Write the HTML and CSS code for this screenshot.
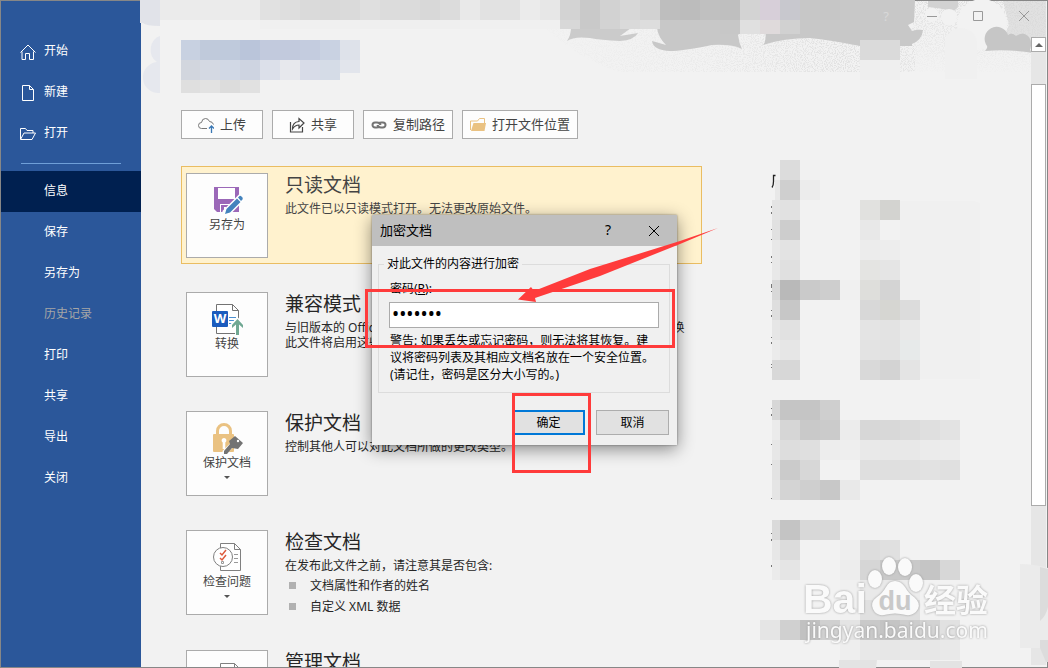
FILE: index.html
```html
<!DOCTYPE html>
<html lang="zh-CN">
<head>
<meta charset="utf-8">
<title>信息</title>
<link rel="stylesheet" href="styles.css">
</head>
<body>
<div class="window">
  <nav class="sidebar">
    <a class="nav-item" href="#"><svg class="nav-icon" viewBox="0 0 16 16"><path d="M.5 8.500 8 1l7.500 7.500M2 7.500v8h3.500v-6h4v6h4v-8"/></svg>开始</a>
    <a class="nav-item" href="#"><svg class="nav-icon" viewBox="0 0 16 16"><path d="M2.500.5h7l4 4v11h-11zM9.500.5v4h4"/></svg>新建</a>
    <a class="nav-item" href="#"><svg class="nav-icon" viewBox="0 0 16 16"><path d="M.5 13V2.500h5l1.500 2h6V7M.5 13.500 4 7h11.500l-3.500 6.500z"/></svg>打开</a>
    <hr class="nav-rule">
    <a class="nav-item nav-item--active" href="#">信息</a>
    <a class="nav-item" href="#">保存</a>
    <a class="nav-item" href="#">另存为</a>
    <a class="nav-item nav-item--disabled" href="#">历史记录</a>
    <a class="nav-item" href="#">打印</a>
    <a class="nav-item" href="#">共享</a>
    <a class="nav-item" href="#">导出</a>
    <a class="nav-item" href="#">关闭</a>
  </nav>

  <svg class="banner-art" viewBox="140 0 908 96" aria-hidden="true">
    <defs>
      <filter id="grain" x="0" y="0" width="1" height="1">
        <feTurbulence type="fractalNoise" baseFrequency="0.9" numOctaves="2" seed="4"/>
        <feColorMatrix values="0 0 0 0 .74  0 0 0 0 .74  0 0 0 0 .74  6 0 0 0 -2.8"/>
        <feComposite in2="SourceGraphic" operator="in"/>
      </filter>
      <linearGradient id="fade" x1="0" y1="0" x2="1" y2="0">
        <stop offset="0" stop-color="#fff" stop-opacity=".1"/>
        <stop offset=".45" stop-color="#fff" stop-opacity=".4"/>
        <stop offset=".8" stop-color="#fff" stop-opacity=".9"/>
        <stop offset="1" stop-color="#fff" stop-opacity=".7"/>
      </linearGradient>
      <linearGradient id="fade-corner" x1="0" y1="0" x2="0" y2="1">
        <stop offset="0" stop-color="#fff"/>
        <stop offset="1" stop-color="#fff" stop-opacity=".1"/>
      </linearGradient>
    </defs>
    <path d="M545 28H915V72H620Q580 60 545 28z" fill="url(#fade)" filter="url(#grain)"/>
    <path d="M913 1h133v71H913z" fill="url(#fade-corner)" filter="url(#grain)"/>
    <path d="M567 41q4-6 4-13h60l-11 8 18-3q-4 7-18 8-20-1-30-3-16-2-23 3z" fill="#cbcbcb"/>
    <path d="M660 28h82l-4 7q1 8 4 14-10-5-30-4-30 6-42 6-17-1-18-10l14 4q-8-8-9-17z" fill="#c8c8c8"/>
    <path d="M763 45q4-4 2-16l35-29h115l-1 22-6 3 4 6q6-2 11-1-1 10-11 14v2h-52q-30-6-50-8-26 0-47 7z" fill="#c8c8c8"/>
    <path d="M928 1h30q2 8-6 10-12-3-24-4z" fill="#d2d2d2"/>
    <path d="M1003 1h43v40h-37q-6-4 0-16z" fill="#d6d6d6" opacity=".6"/>
    <circle cx="982" cy="24" r="25" fill="#f2f2f2"/>
    <circle cx="949" cy="17" r="8" fill="#f2f2f2"/>
    <circle cx="932" cy="15" r="7" fill="#f2f2f2"/>
    <path d="M945 79V44a16 16 0 0 1 32 0v35z" fill="#f0f0f0"/>
    <path d="M985 51q3-3 2-5a12 12 0 1 1 21-11q4-3 8 1 7-5 12 0 5 5 2 14l3 3q-24-4-48-2z" fill="#c6c6c6"/>
    <path d="M160 36a12 14 0 0 0-3 26 14 14 0 0 0 3 31z" fill="#e6e8ee"/>
    <path d="M140 0h20v26q-14 0-17-3h-3z" fill="#e1e3e9"/>
    <g data-mosaic="banner"></g>
  </svg>

  <main class="main">
    <div class="content">
      <header class="titlebar">
        <button class="win-btn win-btn--faint" aria-label="帮助">?</button>
        <button class="win-btn" aria-label="最小化"><svg viewBox="0 0 12 12"><path d="M1 6.500h10"/></svg></button>
        <button class="win-btn" aria-label="最大化"><svg viewBox="0 0 12 12"><path d="M1.500 1.500h9v9h-9z"/></svg></button>
        <button class="win-btn" aria-label="关闭窗口"><svg viewBox="0 0 12 12"><path d="m1 1 10 10M11 1 1 11"/></svg></button>
      </header>
      <svg class="doc-title" viewBox="181 40 180 53" aria-hidden="true"><g data-mosaic="title"></g></svg>

      <div class="toolbar">
        <button class="tool tool--wide"><svg viewBox="0 0 16 16"><path d="M9 11.500H3.500a3 3 0 0 1 0-6q.5-4 4-4 3 0 4 3 3 0 4 3" fill="none" stroke="#777"/><path d="M13.500 16V9M11 11.500l2.500-2.500 2.500 2.500" fill="none" stroke="#3a78b5" stroke-width="1.300"/></svg><span>上传</span></button>
        <button class="tool tool--wide"><svg viewBox="0 0 16 16"><path d="M1.500 5v10h12v-5M3.500 12q0-7 6.500-7.500V1.500L15 6l-5 5V8Q6 8 3.500 12z" fill="none" stroke="#444" stroke-width="1.200"/></svg><span>共享</span></button>
        <button class="tool"><svg viewBox="0 0 16 16"><g fill="none" stroke="#737373" stroke-width="2"><path d="M8.500 9.500q-1 1-3 1H4a2.500 2.500 0 0 1 0-5h2q3 0 3.500 2.500"/><path d="M7.500 6.500q1-1 3-1H12a2.500 2.500 0 0 1 0 5h-2q-3 0-3.500-2.500"/></g></svg><span>复制路径</span></button>
        <button class="tool"><svg viewBox="0 0 16 16"><path d="M.5 13V4h7l2-2.500h5V6" fill="none" stroke="#eac282"/><path d="M1 14 3.500 6H16l-1.500 8z" fill="#eac282"/></svg><span>打开文件位置</span></button>
      </div>

      <div class="columns">
        <div class="sections">
          <section class="info info--notice">
            <button class="tile">
              <svg viewBox="0 0 32 32"><path d="M3 2h25v25H6l-3-3z" fill="#9b68b8"/><path d="M7 3h17v11H7z" fill="#fff"/><path d="M9 19h12v8H9z" fill="#fff"/><path d="M10 20h9v7h-4v-5h-2v5h-3z" fill="#9b68b8"/><path d="M14 29 31 12" stroke="#fff" stroke-width="8"/><path d="m14 29 1.500-5L26 13.500l3.500 3.500L19 27.500zM27 12.500l1.500-1.500q1-.5 2 .5l1 1q.5 1 0 2L30 16z" fill="#4483bd"/></svg>
              另存为
            </button>
            <div class="info-text"><h2>只读文档</h2><p>此文件已以只读模式打开。无法更改原始文件。</p></div>
          </section>

          <section class="info">
            <button class="tile">
              <svg viewBox="0 0 32 32"><path d="M5.500.5h16l6 6v23h-22zM21.500.5v6h6" fill="#fff" stroke="#737373"/><rect x="1" y="7" width="16" height="16" rx="1" fill="#1b5cbe"/><text x="9" y="19" text-anchor="middle" class="word-letter">W</text><path d="M18 13.500h7M18 16.500h5M18 19.500h3" stroke="#4a90d0"/><path d="m26.500 13 7 7.500-3 1L28 19.500V32h-4V19.500l-3 2-2-1z" fill="#fff"/><path d="m26.500 15 5.500 6v3l-4-3.500V31h-3V20.500L21 24v-3z" fill="#70a893"/></svg>
              转换
            </button>
            <div class="info-text"><h2>兼容模式</h2><p>与旧版本的 Office 兼容，可能会禁用某些新功能以防止其中出现问题。转换<br>此文件将启用这些功能，但可能会导致布局更改。</p></div>
          </section>

          <section class="info">
            <button class="tile">
              <svg viewBox="0 0 32 32"><path d="M6.500 12V8a6.500 6.500 0 0 1 13 0v4" fill="none" stroke="#eac282" stroke-width="3"/><rect x="2" y="11" width="21" height="18" rx="1" fill="#eac282"/><path d="M13 15a2.500 2.500 0 0 0-1.300 4.600V26h2.600v-6.400A2.500 2.500 0 0 0 13 15z" fill="#fff"/><path d="m13 30 11-11" stroke="#fff" stroke-width="5"/><path d="m24 13 8 7-5 6-6-1-5 6h-3v-3l6-7-1-3z" fill="#737373"/><circle cx="27" cy="18" r="1.200" fill="#fff"/></svg>
              保护文档<span class="caret"></span>
            </button>
            <div class="info-text"><h2>保护文档</h2><p>控制其他人可以对此文档所做的更改类型。</p></div>
          </section>

          <section class="info">
            <button class="tile">
              <svg viewBox="0 0 32 32"><path d="M9.500 1.500h14l6 6v21h-20zM23.500 1.500v6h6" fill="#fff" stroke="#808080"/><path d="M23 12.500h4M23 16.500h4M23 20.500h4" stroke="#999"/><circle cx="12" cy="15" r="9.500" fill="#fff" stroke="#808080"/><path d="m9 11 2 2 4-5M9 16l2 2 4-5" fill="none" stroke="#dd5a3c" stroke-width="1.500"/><path d="M10.500 19.500h2v2h-2z" fill="none" stroke="#999"/></svg>
              检查问题<span class="caret"></span>
            </button>
            <div class="info-text"><h2>检查文档</h2><p>在发布此文件之前，请注意其是否包含:</p>
              <ul class="findings"><li>文档属性和作者的姓名</li><li>自定义 XML 数据</li></ul></div>
          </section>

          <section class="info">
            <button class="tile">
              <svg viewBox="0 0 32 32"><path d="M9.500 1.500h14l6 6v21h-20zM23.500 1.500v6h6" fill="#fff" stroke="#808080"/></svg>
              管理文档
            </button>
            <div class="info-text"><h2>管理文档</h2></div>
          </section>
        </div>

        <svg class="properties" viewBox="760 160 220 508" aria-hidden="true">
          <path d="M900 201h74l6 2v176h-80z" fill="#f0f0f0"/>
          <g data-mosaic="properties"></g>
          <path d="M775.500 175.500h-2v6q0 4-1.500 6" fill="none" stroke="#222" stroke-width="1.300"/>
          <path d="M771.500 206v2m0 4v2m0 15v1m0 9v1m0 16v2m0 4v1m0 21v4m0 3v1m0 18v1m0 4v2m0 20v1m0 4v2m0 20v1m0 2v1m0 40v1m0 5v2m0 28v1m0 19v1m0 33v1m0 34v1m0 5v2m0 24v2" stroke="#777" fill="none"/>
        </svg>
      </div>
    </div>
    <div class="scrollbar">
      <button class="scroll-up" aria-label="向上滚动"></button>
      <div class="scroll-track"><div class="scroll-thumb"></div></div>
    </div>
  </main>

  <svg class="watermark" viewBox="760 550 288 118" aria-hidden="true">
    <path d="M1020 564q14 0 28 4v80h-28z" fill="#ebebeb"/><path d="M1040 567l8 2v38q-2 9-8 14z" fill="#dcdcdc"/><path d="M1040 640h8v22h-2l-6-14z" fill="#dcdcdc"/>
    <path d="M839 660h38l-1 8h-37zM930 661h32v7h-32z" fill="#e3e3e3"/>
    <g class="mark">
      <text x="803" y="613" class="mark-latin">Bai</text>
      <ellipse cx="875" cy="579" rx="7" ry="9"/><ellipse cx="889" cy="566" rx="7" ry="9"/><ellipse cx="905" cy="567" rx="7" ry="9"/><ellipse cx="916" cy="583" rx="7" ry="9"/>
      <path d="M895 581q6 0 10 6 4 7 9 10 7 6 4 12-4 7-12 6-11-3-22 0-8 1-11-6-3-7 4-12 5-3 9-10 3-6 9-6z"/>
      <text x="924" y="612" class="mark-cjk">经验</text>
      <text x="806" y="638" class="mark-url">jingyan.baidu.com</text>
    </g>
    <text x="895" y="610" text-anchor="middle" class="mark-du">du</text>
  </svg>

  <form class="dialog" role="dialog" aria-labelledby="dialog-title">
    <header class="dialog-head">
      <h1 id="dialog-title">加密文档</h1>
      <button type="button" class="dialog-btn" aria-label="帮助">?</button>
      <button type="button" class="dialog-btn" aria-label="关闭"><svg viewBox="0 0 12 12"><path d="m1 1 10 10M11 1 1 11"/></svg></button>
    </header>
    <fieldset class="group">
      <legend>对此文件的内容进行加密</legend>
      <label for="password">密码(<u>R</u>):</label>
      <input id="password" type="password" value="1234567">
      <p>警告: 如果丢失或忘记密码，则无法将其恢复。建<br>议将密码列表及其相应文档名放在一个安全位置。<br>(请记住，密码是区分大小写的。)</p>
    </fieldset>
    <div class="dialog-actions">
      <button type="button" class="action action--default">确定</button>
      <button type="button" class="action">取消</button>
    </div>
    <svg class="callouts" viewBox="362 215 360 262" aria-hidden="true">
      <g fill="none" stroke="#ff3b3b" stroke-width="3"><path d="M366.500 290.500h307v56h-307z"/><path d="M513.500 394.500h76v77h-76z"/></g>
      <path d="M518 299.500 531 287l3 4 56-22 90-28 38-13-38 16-80 32-65 22 1 4z" fill="#ff3b3b"/>
    </svg>
  </form>
</div>
<script src="mosaic.js"></script>
</body>
</html>
```

FILE: styles.css
```css
* { box-sizing: border-box; }

body {
  margin: 0;
  overflow: hidden;
  font: 12px/16px "Noto Sans", "Noto Sans CJK SC", sans-serif;
  color: #262626;
}

button, input { font: inherit; color: inherit; }
h1, h2, p, ul { margin: 0; padding: 0; font-weight: 400; }

.window {
  position: relative;
  display: grid;
  grid-template-columns: 140px 1fr;
  height: 100vh;
  padding: 1px;
  background: #878787;
}

.sidebar { padding-top: 30px; background: #2b579a; }
.nav-item {
  display: flex;
  align-items: center;
  height: 41px;
  padding: 0 0 2px 43px;
  color: #fff;
  text-decoration: none;
}
.nav-icon {
  width: 16px;
  height: 16px;
  margin: 2px 8px 0 -24px;
  fill: none;
  stroke: #fff;
}
.nav-rule { height: 1px; margin: 9px 20px 7px; border: 0; background: #6f9fd8; }
.nav-item--active { background: #002050; }
.nav-item--disabled { color: #a6a6a6; }

.banner-art {
  position: absolute;
  top: 0;
  left: 140px;
  width: 908px;
  height: 96px;
}

.main { display: flex; min-width: 0; min-height: 0; background: #f2f2f2; }
.content { position: relative; flex: 1; min-width: 0; padding-left: 40px; overflow: hidden; }

.titlebar { display: flex; justify-content: flex-end; height: 29px; margin-right: -16px; }
.win-btn { width: 46px; padding: 0; border: 0; background: none; color: #999; }
.win-btn--faint { color: #d8d8d8; font-size: 13px; }
.win-btn svg { width: 12px; height: 12px; fill: none; stroke: #999; vertical-align: middle; }

.doc-title { display: block; width: 180px; height: 53px; margin: 10px 0 17px; }

.toolbar { display: flex; gap: 9px; margin-bottom: 27px; }
.tool {
  display: flex;
  align-items: center;
  justify-content: center;
  gap: 6px;
  height: 29px;
  padding: 0 7px 2px;
  border: 1px solid #ababab;
  background: #fdfdfd;
  color: #444;
  font-size: 13px;
}
.tool--wide { width: 82px; }
.tool svg { width: 16px; height: 16px; margin-top: 2px; }

.columns { display: flex; gap: 58px; }
.sections { display: flex; flex-direction: column; gap: 28px; flex: 0 1 521px; }
.info { display: flex; align-items: flex-start; gap: 17px; padding: 6px 5px 0; }
.info--notice {
  margin-bottom: -6px;
  padding: 6px 4px 5px;
  border: 1px solid #eabd62;
  background: #fff2ce;
  color: #444;
}
.tile {
  display: flex;
  flex-direction: column;
  align-items: center;
  flex: none;
  width: 82px;
  height: 85px;
  padding: 11px 0 0;
  border: 1px solid #ababab;
  background: #fdfdfd;
  color: #444;
}
.tile svg { width: 32px; height: 32px; overflow: visible; }
.word-letter { font: bold 13px "Open Sans", sans-serif; fill: #fff; }
.caret {
  margin-top: 5px;
  border: 3px solid transparent;
  border-top-color: #555;
  border-bottom: 0;
}
.info-text { white-space: nowrap; }
.info-text h2 { font-size: 19px; line-height: 24px; }
.info-text p { padding-top: 4px; line-height: 15px; }
.findings { padding-top: 1px; list-style: none; }
.findings li { display: flex; align-items: center; gap: 14px; height: 21px; padding: 2px 0 0 4px; }
.findings li::before { content: ""; width: 7px; height: 7px; background: #b1b1b1; }

.properties { flex: none; width: 220px; height: 508px; margin-top: -6px; }

.scrollbar { display: flex; flex-direction: column; width: 15px; margin: 36px 1px 2px 0; position: relative; background: #e6e6e6; }
.scroll-up { display: grid; place-items: center; height: 15px; padding: 0; border: 1px solid #ababab; background: #fff; }
.scroll-up::before { content: ""; border: 4px solid transparent; border-bottom-color: #666; border-top: 0; }
.scroll-track { flex: 1; display: grid; grid-template-rows: 32fr 422fr 159fr; }
.scroll-thumb { grid-row: 2; border: 1px solid #ababab; background: #fff; }

.watermark { position: absolute; right: 0; bottom: 0; width: 288px; height: 118px; }
.mark { fill: #fafafa; filter: drop-shadow(0 0 1px #999); }
.mark-latin { font: bold 41px "Liberation Sans", sans-serif; }
.mark-cjk { font: bold 32px "Noto Sans CJK SC", sans-serif; }
.mark-url { font: 21px "Noto Sans", sans-serif; }
.mark-du { font: bold 27px "Liberation Sans", sans-serif; fill: #c9c9c9; }

.dialog {
  position: absolute;
  top: 215px;
  left: 372px;
  width: 305px;
  padding-bottom: 10px;
  background: #f0f0f0;
  box-shadow: 0 4px 16px rgba(0, 0, 0, .45), 0 0 2px rgba(0, 0, 0, .4);
  color: #000;
}
.dialog-head { display: flex; height: 31px; background: #bfbfbf; }
.dialog-head h1 { flex: 1; padding-left: 8px; font-size: 13px; line-height: 31px; }
.dialog-btn { width: 46px; padding: 0 0 2px; border: 0; background: none; font-size: 14px; }
.dialog-btn svg { width: 12px; height: 12px; fill: none; stroke: #000; vertical-align: middle; }
.group {
  margin: 10px 7px 17px 6px;
  padding: 9px 10px 9px;
  border: 1px solid #dcdcdc;
}
.group legend { margin-left: -5px; padding: 0 3px; }
.group label { display: block; padding-left: 1px; margin-bottom: 5px; }
.group input {
  display: block;
  width: 100%;
  height: 26px;
  padding: 0 2px 2px;
  border: 1px solid #ababab;
  background: #fff;
  font-size: 19px;
}
.group p { padding: 4px 0 0 1px; line-height: 17px; white-space: nowrap; }
.dialog-actions { display: flex; justify-content: flex-end; gap: 11px; padding-right: 8px; }
.action { width: 73px; height: 25px; padding: 0; border: 1px solid #adadad; background: #e1e1e1; }
.action--default { border: 2px solid #0078d7; }
.callouts { position: absolute; top: 0; left: -10px; width: 360px; height: 262px; pointer-events: none; }
```

FILE: mosaic.js
```js
// Each row: [x, y, height, "colour colour ..."]; cells are 20px wide, "-" leaves a gap.
const MOSAICS = {
  banner: [
    [160, 0, 20, "ebebeb ebebeb ebebeb ebebeb ebebeb e1e1e1 dedede dadada d9d9d9 dadada dfdfdf dcdcdc dbdbdb d8d8d8 dcdcdc e9e9e9 e2e2e2 e2e2e2 ebebeb e7e7e7 d3d3d3 c9c9c9 d2d2d2 d7d7d7 d2d2d2 bebebe bcbcbc c0c0c0 bfbfbf d3d3d3 d7cfd9 c8c8ce c7c7c7 c6c6c6"],
    [260, 20, 9, "f0f0f0 f0f0f0 f0f0f0 f0f0f0 f0f0f0 efefef efefef efefef efefef efefef f0f0f0 f0f0f0 f0f0f0 f0f0f0 f0f0f0 d8d8d8 c9c9c9 d3d3d3 dadada dddddd"],
    [660, 20, 14, "c8c8c8 c8c8c8 c8c8c8 c7c7c7 e0e0e0 dfdadb d1d1d1 c8c8c8"],
    [860, 40, 20, "dadada dadada"],
    [860, 60, 20, "eeeeee efefef"]
  ],
  title: [
    [180, 40, 20, "c8d1e1 c0cadb bfcadc bac5da c2cadd c2cadd c4ccdf c9d2e2 dee2ea"],
    [180, 60, 20, "d2d6de d4d9e3 d1d8e5 ced4e1 dce0ea e7e8ed d8dce8 d5dce7"],
    [340, 60, 13, "e2e5ec"],
    [180, 80, 13, "dfdfdf e2e2e2 dcdcdc e1e1e1"]
  ],
  properties: [
    [780, 160, 20, "dcdcdc f1f1f1"],
    [780, 180, 20, "cfcfcf ececec"],
    [780, 200, 20, "e1e1e1 - - - e1e1df d3d3d0"],
    [780, 220, 20, "cdcdcd - - - e8e8e8"],
    [780, 240, 20, "e3e3e3 - - - ececec ededed"],
    [780, 260, 20, "e0e0e0 - - - e4e4e2 e5e5e5"],
    [780, 280, 20, "b9b9b9 cacaca cecece f0f0f0 dededb d4d4d4"],
    [780, 300, 20, "c7c7c7 - - - d8d8d8 d6d6d2 dcdcdc"],
    [780, 320, 20, "e1e1e1 - - - e4e4e4 e3e3e3 e9e9e9"],
    [780, 340, 20, "e6e6e6 - - - e3e3e3 e2e2e2 e7eaea"],
    [780, 360, 20, "d7d7d7 - - - d9d9d9 d3d3d3 e4e4e4"],
    [780, 400, 20, "c5c5c5 c5c5c5 cfcfcf"],
    [780, 420, 20, "d6d6d6 c9c9c9 cbcbcb ececec d7d7d7 d8d8d8 dbdbdb dfdfdf e3e3e3"],
    [780, 440, 20, "dddddd dfdfdf ededed eeeeee e9e9e9 e8e8e8 e8e8e8 ebebeb ececec"],
    [780, 460, 20, "cbcbcb d7d7d7 - - dfdfdf dfdfdf e0e0e0 e2e2e2 e0e0e0"],
    [780, 480, 20, "d4d4d4 cfcfcf c8c8c8 e9e9e9"],
    [780, 520, 20, "c4c4c4 d8d8d8 d9d9d9"],
    [780, 540, 20, "dcdcdc - - eeeeee dddddd e0e0e0"],
    [780, 560, 20, "e5e5e5 - - ededed d6d6d6 c9c9c9 c9c9c9 c5c5c5 d7d7d7"],
    [840, 580, 20, "f0f0f0 e9e9e9 e9e9e9 ececec"],
    [840, 600, 20, "f0f0f0 e0e0e0 e0e0e0 dfdfdf"],
    [760, 620, 20, "e5e5e5 d0d0d0 c1c1c1 d0d0d0 e4e4e4 c9c9c9 c4c4c4 cdcdcd d3d3d3 e1e1e1"],
    [840, 640, 20, "eeeeee e8e8e8 e7e7e7 e8e8e8 e7e7e7 e9e9e9"]
  ]
};

// Narrow column at the left edge of the properties: [y, colour]
const EDGE = [
  [180, "e8e8e8"], [200, "e4e4e4"], [220, "e1e1e1"], [240, "e8e8e8"], [260, "e8e8e8"],
  [280, "d8d8d8"], [300, "dedede"], [320, "e6e6e6"], [340, "ebebeb"], [360, "d8d8d8"],
  [400, "d7d7d7"], [420, "ebebeb"], [440, "e7e7e7"], [460, "e3e3e3"], [480, "e5e5e5"],
  [520, "dadada"], [540, "e7e7e7"], [560, "ebebeb"]
];

function cell(parent, x, y, width, height, colour) {
  const rect = document.createElementNS("http://www.w3.org/2000/svg", "rect");
  const attributes = { x, y, width, height, fill: "#" + colour };
  for (const name in attributes) rect.setAttribute(name, attributes[name]);
  parent.append(rect);
}

for (const group of document.querySelectorAll("[data-mosaic]")) {
  for (const [x, y, height, row] of MOSAICS[group.dataset.mosaic]) {
    row.split(" ").forEach((colour, i) => {
      if (colour !== "-") cell(group, x + i * 20, y, 20, height, colour);
    });
  }
}

const properties = document.querySelector('[data-mosaic="properties"]');
for (const [y, colour] of EDGE) cell(properties, y < 200 ? 775 : 772, y, y < 200 ? 5 : 8, 20, colour);
```
